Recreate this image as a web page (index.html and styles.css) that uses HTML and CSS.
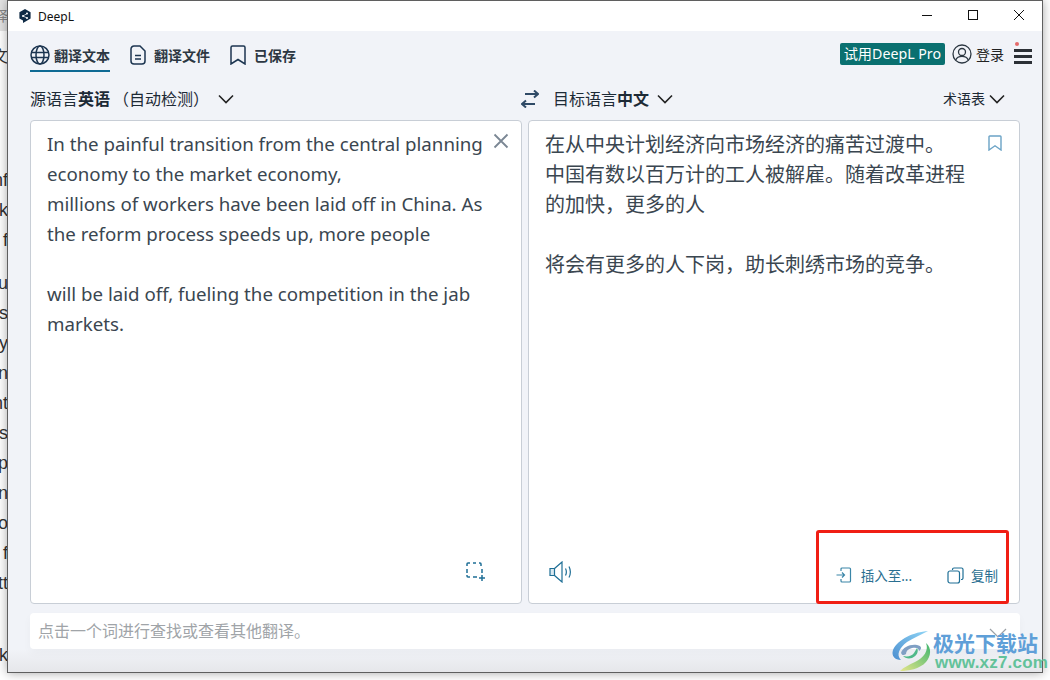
FILE: index.html
```html
<!DOCTYPE html>
<html lang="en">
<head>
    <meta charset="UTF-8">
    <meta name="viewport" content="width=device-width, initial-scale=1.0">
    <title>DeepL</title>
    <link rel="stylesheet" href="styles.css">
</head>
<body>
    <!-- Page behind the app window -->
    <div class="backdrop">
        <div class="backdrop-top">译</div>
        <div class="backdrop-cut">文</div>
        <div class="backdrop-lines first">
            <span>nf</span><span>rk</span><span>f</span>
        </div>
        <div class="backdrop-lines second">
            <span>u</span><span>s</span><span>y</span><span>n</span><span>nt</span><span>os</span><span>p</span><span>n</span><span>ro</span><span>f</span><span>tt</span>
        </div>
        <div class="backdrop-lines third"><span>rk</span></div>
        <div class="backdrop-bottom">for smaller. Food will relax more for them to find jobs and help in</div>
    </div>

    <div class="window">
        <div class="titlebar">
            <svg class="app-logo" width="14" height="16" viewBox="0 0 14 16">
                <path d="M7 1l5.600 3.200v6.400L8 13.300 5 15v-2.600L1.400 10.600V4.200z" fill="#0f2b46"/>
                <circle cx="5" cy="8" r="1" fill="#fff"/>
                <circle cx="9" cy="5.600" r="1" fill="#fff"/>
                <circle cx="9" cy="10" r="1" fill="#fff"/>
                <path d="M5 8l4-2.400M5 8l4 2" stroke="#fff" stroke-width=".7"/>
            </svg>
            <span class="app-name">DeepL</span>
            <div class="window-controls">
                <svg width="12" height="12" viewBox="0 0 12 12"><path d="M1 6.500h10" stroke="#111" stroke-width="1"/></svg>
                <svg width="12" height="12" viewBox="0 0 12 12"><rect x="1.500" y="1.500" width="9" height="9" fill="none" stroke="#111"/></svg>
                <svg width="12" height="12" viewBox="0 0 12 12"><path d="M1 1l10 10M11 1L1 11" stroke="#111" stroke-width="1"/></svg>
            </div>
        </div>

        <div class="main">
            <nav class="topnav">
                <a class="tab active">
                    <svg width="20" height="20" viewBox="0 0 20 20" fill="none" stroke="#1c3550" stroke-width="1.500">
                        <circle cx="10" cy="10" r="9"/>
                        <ellipse cx="10" cy="10" rx="4" ry="9"/>
                        <path d="M1 7.500h18M1 12.500h18"/>
                    </svg>
                    翻译文本
                </a>
                <a class="tab">
                    <svg width="16" height="20" viewBox="0 0 16 20" fill="none" stroke="#1c3550" stroke-width="1.500">
                        <path d="M4 1h6l5 5v10a3 3 0 0 1-3 3H4a3 3 0 0 1-3-3V4a3 3 0 0 1 3-3z"/>
                        <path d="M5 10.500h6M5 14h6"/>
                    </svg>
                    翻译文件
                </a>
                <a class="tab">
                    <svg width="16" height="20" viewBox="0 0 16 20" fill="none" stroke="#1c3550" stroke-width="1.500">
                        <path d="M2.500 1h11A1.500 1.500 0 0 1 15 2.500V19l-7-4.500L1 19V2.500A1.500 1.500 0 0 1 2.500 1z"/>
                    </svg>
                    已保存
                </a>
                <div class="nav-right">
                    <span class="pro-badge">试用DeepL Pro</span>
                    <svg class="user-icon" width="20" height="20" viewBox="0 0 20 20" fill="none" stroke="#2c3742" stroke-width="1.300">
                        <circle cx="10" cy="10" r="9"/>
                        <circle cx="10" cy="8" r="3.500"/>
                        <path d="M3.800 16c1-2.600 3.400-3.600 6.200-3.600s5.200 1 6.200 3.600"/>
                    </svg>
                    <span class="login">登录</span>
                    <div class="menu">
                        <i class="menu-dot"></i>
                        <i class="menu-line"></i>
                        <i class="menu-line"></i>
                        <i class="menu-line"></i>
                    </div>
                </div>
            </nav>

            <div class="lang-row">
                <div class="lang-source">
                    <span>源语言<b>英语</b></span>
                    <span class="detect">（自动检测）</span>
                    <svg class="chevron" width="16" height="10" viewBox="0 0 16 10"><path d="M1 1.500l7 7 7-7" fill="none" stroke="#222" stroke-width="1.600"/></svg>
                </div>
                <div class="lang-target">
                    <svg class="swap" width="18" height="18" viewBox="0 0 18 18" fill="none" stroke="#2f4a66" stroke-width="2">
                        <path d="M4 4h13M13 .5L17 4l-4 3.500M14 14H1M5 10.500L1 14l4 3.500"/>
                    </svg>
                    <span>目标语言<b>中文</b></span>
                    <svg class="chevron" width="16" height="10" viewBox="0 0 16 10"><path d="M1 1.500l7 7 7-7" fill="none" stroke="#222" stroke-width="1.600"/></svg>
                    <div class="glossary">
                        <span>术语表</span>
                        <svg width="16" height="10" viewBox="0 0 16 10"><path d="M1 1.500l7 7 7-7" fill="none" stroke="#222" stroke-width="1.600"/></svg>
                    </div>
                </div>
            </div>

            <div class="panels">
                <section class="panel source">
                    <div class="panel-text">
                        <p>In the painful transition from the central planning economy to the market economy,</p>
                        <p>millions of workers have been laid off in China. As the reform process speeds up, more people</p>
                        <p class="blank"></p>
                        <p>will be laid off, fueling the competition in the jab markets.</p>
                    </div>
                    <svg class="clear" width="16" height="16" viewBox="0 0 16 16"><path d="M1.500 1.500l13 13M14.500 1.500l-13 13" stroke="#7b8794" stroke-width="1.800"/></svg>
                    <div class="panel-foot source-foot">
                        <svg width="19" height="19" viewBox="0 0 19 19" fill="none" stroke="#1f6f96" stroke-width="1.500">
                            <path d="M1 4V2a1 1 0 0 1 1-1h2M7 1h3M13 1h1a1 1 0 0 1 1 1v2M16 7v4M1 7v4M1 13v1a1 1 0 0 0 1 1h2M7 15h4M13 16h6M16 13v6"/>
                        </svg>
                    </div>
                </section>
                <section class="panel target">
                    <div class="panel-text zh">
                        <p>在从中央计划经济向市场经济的痛苦过渡中。</p>
                        <p>中国有数以百万计的工人被解雇。随着改革进程的加快，更多的人</p>
                        <p class="blank"></p>
                        <p>将会有更多的人下岗，助长刺绣市场的竞争。</p>
                    </div>
                    <svg class="save" width="14" height="16" viewBox="0 0 14 16"><path d="M1.800 1h10.400a.8.800 0 0 1 .8.800V15L7 10.800 1 15V1.800A.8.800 0 0 1 1.800 1z" fill="none" stroke="#6ba3c6" stroke-width="1.400"/></svg>
                    <div class="panel-foot target-foot">
                        <svg class="speaker" width="23" height="22" viewBox="0 0 23 22" fill="none" stroke="#1f6f96" stroke-width="1.200">
                            <path d="M1 7.500h4.500v7H1z" fill="#d9e8f0"/>
                            <path d="M5.500 7.500L13 1v20l-7.500-6.500"/>
                            <path d="M16.500 7.500c1.100 2.200 1.100 4.800 0 7M20 5.500c1.700 3.400 1.700 7.600 0 11"/>
                        </svg>
                        <div class="actions">
                            <a class="action insert">
                                <svg width="16" height="16" viewBox="0 0 16 16" fill="none" stroke="#3b86a8" stroke-width="1.200">
                                    <path d="M5 4V2a1 1 0 0 1 1-1h7.500a1 1 0 0 1 1 1v12a1 1 0 0 1-1 1H6a1 1 0 0 1-1-1v-2M.5 8h8M6 5.500L8.500 8 6 10.500"/>
                                </svg>
                                插入至...
                            </a>
                            <a class="action">
                                <svg width="17" height="17" viewBox="0 0 17 17" fill="none" stroke="#1f6f96" stroke-width="1.200">
                                    <path d="M5.500 3V2.500a1.500 1.500 0 0 1 1.500-1.500h7.500A1.500 1.500 0 0 1 16 2.500V11a1.500 1.500 0 0 1-1.500 1.500H14"/>
                                    <rect x="1" y="4" width="11.500" height="12" rx="2"/>
                                </svg>
                                复制
                            </a>
                        </div>
                    </div>
                </section>
            </div>

            <div class="lookup">点击一个词进行查找或查看其他翻译。</div>
        </div>
    </div>

    <!-- Annotation and watermark sit over the screenshot -->
    <div class="highlight"></div>
    <svg class="lookup-chevron" width="18" height="12" viewBox="0 0 18 12"><path d="M1 1l8 8 8-8" fill="none" stroke="#9aa0a6" stroke-width="1.200"/></svg>
    <div class="watermark">
        <svg class="wm-logo" width="46" height="44" viewBox="0 0 46 44">
            <defs>
                <linearGradient id="wm-blue" x1="1" y1="0" x2="0" y2="1">
                    <stop offset="0" stop-color="#8fd4f5"/>
                    <stop offset="1" stop-color="#4c8fd0"/>
                </linearGradient>
                <linearGradient id="wm-green" x1="1" y1="0" x2="0" y2="1">
                    <stop offset="0" stop-color="#3fb56f"/>
                    <stop offset="1" stop-color="#e6e68a"/>
                </linearGradient>
            </defs>
            <path d="M38 2C24 3 8 10 3 21c-2 6 2 10 8 10C6 26 9 19 17 13 23 9 31 6 38 2z" fill="url(#wm-blue)"/>
            <path d="M11 24c2-6 9-9 16-8 5 .7 5 4 2 6 0-3-3-4-7-3-4 1-6 3-6 6-3 2-4 1-5-1z" fill="#7f9fc4"/>
            <path d="M36 14c3 7-2 15-11 19-6 3-11 5-15 9 8 0 20-2 26-9 5-6 6-14 0-19z" fill="url(#wm-green)"/>
            <path d="M27 19c2 3 0 8-5 10-4 1-7 0-9-2 5 1 9 0 11-3 1-2 2-3 3-5z" fill="#4fb98a"/>
        </svg>
        <div class="wm-text">
            <span class="wm-title">极光下载站</span>
            <span class="wm-url">www.xz7.com</span>
        </div>
    </div>
</body>
</html>
```

FILE: styles.css
```css
body {
    font-family: "Noto Sans", "Noto Sans CJK SC", sans-serif;
    margin: 0;
    padding: 0;
    width: 1050px;
    height: 680px;
    overflow: hidden;
    position: relative;
    background-color: #fff;
    color: #2c3742;
}
.backdrop {
    position: absolute;
    inset: 0;
    font-family: "Liberation Sans", sans-serif;
    font-size: 18px;
    color: #333;
}
.backdrop-top {
    position: absolute;
    left: 0;
    top: 0;
    width: 8px;
    height: 31px;
    overflow: hidden;
    background-color: #e4e4e4;
    color: #888;
    font-family: "Noto Sans CJK SC", sans-serif;
    font-size: 14px;
    line-height: 30px;
    direction: rtl;
}
.backdrop-cut {
    position: absolute;
    left: 0;
    top: 45px;
    width: 8px;
    overflow: hidden;
    font-family: "Noto Sans CJK SC", sans-serif;
    font-size: 16px;
    line-height: 20px;
    direction: rtl;
}
.backdrop-lines {
    position: absolute;
    left: 0;
    width: 8px;
    display: flex;
    flex-direction: column;
    align-items: flex-end;
    overflow: hidden;
    line-height: 30px;
}
.backdrop-lines span {
    height: 30px;
    white-space: nowrap;
}
.backdrop-lines.first { top: 165px; }
.backdrop-lines.second { top: 268px; }
.backdrop-lines.third { top: 640px; }
.backdrop-bottom {
    position: absolute;
    left: 25px;
    top: 675px;
    white-space: nowrap;
    line-height: 24px;
    font-size: 19px;
}
.window {
    position: absolute;
    left: 7px;
    top: 0;
    width: 1034px;
    height: 671px;
    display: flex;
    flex-direction: column;
    border: 1px solid #5f5f5f;
    background-color: #f1f3f8;
    box-shadow: 0 0 10px rgba(0, 0, 0, 0.35);
}
.titlebar {
    height: 30px;
    flex: none;
    display: flex;
    align-items: center;
    padding-left: 10px;
    background-color: #fff;
    font-size: 12px;
    color: #111;
}
.app-logo {
    margin-right: 6px;
}
.window-controls {
    margin-left: auto;
    display: flex;
    gap: 34px;
    padding-right: 17px;
    padding-bottom: 2px;
}
.main {
    flex: 1;
    min-height: 0;
    padding: 0 22px;
    background: linear-gradient(#f1f3f8 618px, #e6e7ea);
    display: flex;
    flex-direction: column;
}
.topnav {
    display: flex;
    align-items: flex-start;
    gap: 20px;
    padding-top: 9px;
    box-sizing: border-box;
    height: 53px;
}
.tab {
    display: flex;
    align-items: center;
    gap: 8px;
    height: 30px;
    font-size: 14px;
    font-weight: 700;
    color: #2c3742;
}
.tab.active {
    gap: 4px;
    border-bottom: 2px solid #0f6a94;
}
.nav-right {
    margin-left: auto;
    margin-right: -12px;
    margin-top: 2px;
    display: flex;
    align-items: center;
    height: 24px;
}
.pro-badge {
    background-color: #0a7070;
    color: #fff;
    font-size: 14.200px;
    line-height: 22px;
    padding: 0 4px;
    border-radius: 2px;
    white-space: nowrap;
}
.user-icon {
    margin-left: 7px;
}
.login {
    margin-left: 4px;
    font-size: 14px;
    color: #222;
}
.menu {
    position: relative;
    margin-left: 10px;
    width: 18px;
    display: flex;
    flex-direction: column;
    gap: 3px;
    padding-top: 4px;
}
.menu-line {
    display: block;
    height: 3px;
    background-color: #2c3036;
}
.menu-dot {
    position: absolute;
    left: 1px;
    top: -3px;
    width: 4px;
    height: 4px;
    border-radius: 50%;
    background-color: #e46a6a;
}
.lang-row {
    height: 36px;
    display: flex;
    align-items: flex-start;
    padding-top: 3px;
    box-sizing: border-box;
    font-size: 16px;
    color: #1d2a36;
}
.lang-row span {
    padding-bottom: 2px;
}
.lang-row b {
    font-weight: 700;
}
.lang-source, .lang-target {
    display: flex;
    align-items: center;
    height: 24px;
}
.lang-source {
    width: 491px;
}
.detect {
    margin-left: 3px;
}
.lang-source .chevron {
    margin-left: 9px;
}
.lang-target {
    flex: 1;
}
.swap {
    margin-right: 14px;
}
.lang-target .chevron {
    margin-left: 8px;
}
.glossary {
    margin-left: auto;
    margin-right: 15px;
    display: flex;
    align-items: center;
    gap: 4px;
    font-size: 14px;
}
.panels {
    height: 484px;
    flex: none;
    display: flex;
    gap: 6px;
}
.panel {
    position: relative;
    flex: 1;
    display: flex;
    flex-direction: column;
    background-color: #fff;
    border: 1px solid #c8ced6;
    border-radius: 4px;
    box-sizing: border-box;
}
.panel-text {
    flex: 1;
    padding: 8px 30px 0 16px;
    font-size: 18.700px;
    line-height: 30px;
    color: #3a4650;
}
.panel-text.zh {
    font-size: 20px;
    padding: 9px 50px 0 16px;
}
.panel-text p {
    margin: 0;
}
.panel-text .blank {
    height: 30px;
}
.clear {
    position: absolute;
    right: 12px;
    top: 12px;
}
.save {
    position: absolute;
    right: 17px;
    top: 14px;
}
.panel-foot {
    flex: none;
    height: 42px;
    display: flex;
}
.source-foot {
    justify-content: flex-end;
    padding-right: 36px;
    padding-top: 1px;
    box-sizing: border-box;
}
.target-foot {
    justify-content: space-between;
    padding: 0 21px 0 20px;
    align-items: flex-start;
}
.actions {
    display: flex;
    gap: 35px;
    padding-top: 4px;
}
.action {
    display: flex;
    align-items: center;
    gap: 7px;
    font-size: 13.500px;
    color: #2a6f91;
}
.insert {
    gap: 9px;
}
.lookup {
    margin-top: 9px;
    height: 36px;
    line-height: 37px;
    padding-left: 8px;
    background-color: #fff;
    border-radius: 4px;
    box-shadow: 0 4px 10px rgba(0, 0, 0, 0.03);
    font-size: 16px;
    color: #a0a4a8;
}
.highlight {
    position: absolute;
    left: 816px;
    top: 530px;
    width: 193px;
    height: 74px;
    box-sizing: border-box;
    border: 3px solid #f01e14;
    border-radius: 3px;
}
.lookup-chevron {
    position: absolute;
    left: 989px;
    top: 628px;
}
.watermark {
    position: absolute;
    left: 890px;
    top: 629px;
    display: flex;
}
.wm-logo {
    margin-right: -3px;
}
.wm-text {
    display: flex;
    flex-direction: column;
    font-family: "Noto Sans CJK SC", sans-serif;
    font-weight: 700;
}
.wm-title {
    font-size: 21px;
    line-height: 26px;
    color: #5f9fd8;
}
.wm-url {
    font-family: "Liberation Sans", sans-serif;
    font-size: 17px;
    line-height: 16px;
    margin-left: 2px;
    color: #63c29a;
    letter-spacing: 0.200px;
}
```
